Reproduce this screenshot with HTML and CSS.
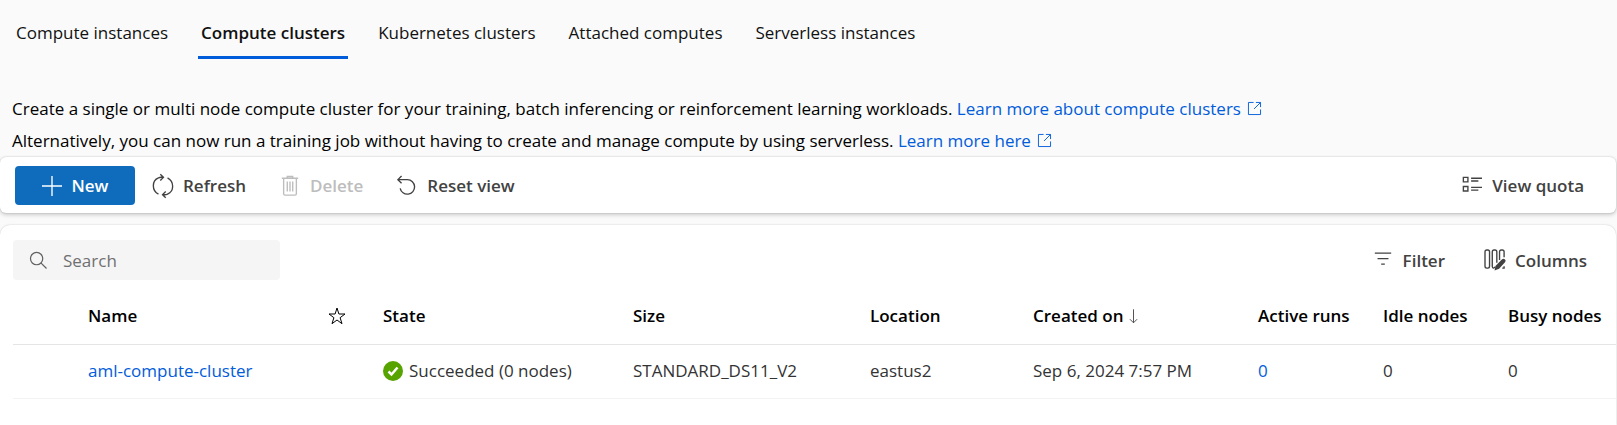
FILE: index.html
```html
<!DOCTYPE html>
<html lang="en">

<head>
    <meta charset="UTF-8">
    <meta name="viewport" content="width=device-width, initial-scale=1.0">
    <title>Compute</title>
    <link rel="stylesheet" href="styles.css">
</head>

<body>
    <nav class="tabs">
        <a class="tab" href="#instances">Compute instances</a>
        <a class="tab active" href="#clusters" aria-current="page">Compute clusters</a>
        <a class="tab" href="#kubernetes">Kubernetes clusters</a>
        <a class="tab" href="#attached">Attached computes</a>
        <a class="tab" href="#serverless">Serverless instances</a>
    </nav>

    <div class="intro">
        <p>Create a single or multi node compute cluster for your training, batch inferencing or reinforcement learning workloads.
            <a href="#learn-clusters">Learn more about compute clusters
                <svg class="external" viewBox="0 0 14 14"><path d="M6 .5H.5v13h13V8M8.5 .5h5v5M13.5 .5l-7 7" /></svg></a></p>
        <p>Alternatively, you can now run a training job without having to create and manage compute by using serverless.
            <a href="#learn-serverless">Learn more here
                <svg class="external" viewBox="0 0 14 14"><path d="M6 .5H.5v13h13V8M8.5 .5h5v5M13.5 .5l-7 7" /></svg></a></p>
    </div>

    <div class="toolbar">
        <button class="btn primary" type="button">
            <svg class="icon" viewBox="0 0 22 22"><path d="M11 0v22M0 11h22" /></svg>
            New
        </button>
        <button class="btn" type="button">
            <svg class="icon" viewBox="0 0 22 22"><path d="M6 20C-1.500 16-1.500 5 6 2q2-1 5-.5M8-2l3.500 3.500L8 5M16 2c7.500 4 7.500 15 0 18q-2 1-5 .5M14 24l-3.500-3.500L14 17" /></svg>
            Refresh
        </button>
        <button class="btn" type="button" disabled>
            <svg class="icon" viewBox="0 0 22 22"><path d="M2 2.500h18M8 2.500v-2h6v2M4 2.500V19.500q0 1.500 1.500 1.500h11q1.500 0 1.500-1.500V2.500M8 6v11M11 6v11M14 6v11" /></svg>
            Delete
        </button>
        <button class="btn" type="button">
            <svg class="icon" viewBox="0 0 22 22"><path d="M5 0 1 4l4 4M1 4h10.500a8 8 0 1 1-8 9.500" /></svg>
            Reset view
        </button>
        <button class="btn right" type="button">
            <svg class="icon" viewBox="0 0 22 22"><path d="M1.500 1.500h5v5h-5zM1.500 11.500h5v5h-5zM10 2.500h12M10 5.500h8M10 12.500h12M10 15.500h8" /></svg>
            View quota
        </button>
    </div>

    <div class="card">
        <div class="card-bar">
            <label class="search">
                <svg class="icon-search" viewBox="0 0 18 18"><circle cx="7" cy="7" r="6.500" /><path d="m11.500 11.500 6 6" /></svg>
                <input type="search" placeholder="Search" aria-label="Search">
            </label>
            <button class="btn right" type="button">
                <svg class="icon" viewBox="0 0 22 22"><path d="M2 3.500h18M5 9.500h12M9 15.500h4" /></svg>
                Filter
            </button>
            <button class="btn" type="button">
                <svg class="icon" viewBox="0 0 22 22">
                    <rect x="0" y="0" width="5" height="20" rx="2" />
                    <path d="M11 18.500q-2.500 3-3-.5V2q0-2 2-2h1q2 0 2 2v12M16 11V2q0-2 2-2h1q2 0 2 2v6M21 18v2h-2" />
                    <path class="solid" d="m10.500 22.500 1-5 7-7q2-1.500 3.500 0t0 3L15.500 20.500z" />
                </svg>
                Columns
            </button>
        </div>

        <table class="grid">
            <colgroup>
                <col class="col-select">
                <col class="col-name">
                <col class="col-star">
                <col class="col-state">
                <col class="col-size">
                <col class="col-location">
                <col class="col-created">
                <col class="col-count">
                <col class="col-count">
                <col>
            </colgroup>
            <thead>
                <tr>
                    <th></th>
                    <th>Name</th>
                    <th><svg class="star" viewBox="0 0 18 18" role="img" aria-label="Favorite"><path d="M9 1l1.900 6h6.100l-4.900 3.700 1.900 6L9 13l-5 3.700 1.900-6L1 7h6.100z" /></svg></th>
                    <th>State</th>
                    <th>Size</th>
                    <th>Location</th>
                    <th>Created on <svg class="sort" viewBox="0 0 10 16"><path d="M5 0v15M1 11l4 4 4-4" /></svg></th>
                    <th>Active runs</th>
                    <th>Idle nodes</th>
                    <th>Busy nodes</th>
                </tr>
            </thead>
            <tbody>
                <tr>
                    <td></td>
                    <td><a href="#aml-compute-cluster">aml-compute-cluster</a></td>
                    <td></td>
                    <td>
                        <span class="state">
                            <svg class="ok" viewBox="0 0 20 20"><circle cx="10" cy="10" r="10" /><path d="m5.500 10.500 3 3 6-7" /></svg>
                            Succeeded (0 nodes)
                        </span>
                    </td>
                    <td>STANDARD_DS11_V2</td>
                    <td>eastus2</td>
                    <td>Sep 6, 2024 7:57 PM</td>
                    <td><a href="#runs">0</a></td>
                    <td>0</td>
                    <td>0</td>
                </tr>
            </tbody>
        </table>
    </div>
</body>

</html>
```
FILE: styles.css
```css
* {
    box-sizing: border-box;
}

body {
    margin: 0;
    min-height: 100vh;
    display: flex;
    flex-direction: column;
    background-color: #fafafa;
    color: #000;
    font-family: "Open Sans", sans-serif;
    font-size: 17px;
    line-height: 24px;
}

a {
    color: #015cda;
    text-decoration: none;
}

svg {
    fill: none;
    stroke: currentColor;
    overflow: visible;
    flex-shrink: 0;
}

/* Tabs */
.tabs {
    display: flex;
    gap: 27px;
    padding: 21px 13px 0;
}

.tab {
    padding: 0 3px 11px;
    color: #111;
    border-bottom: 3px solid transparent;
}

.tab.active {
    font-weight: 600;
    border-bottom-color: #015cda;
}

/* Description */
.intro {
    padding: 34px 12px 0;
}

.intro p {
    margin: 0;
    line-height: 32px;
}

.external {
    width: 13px;
    height: 13px;
    margin-left: 3px;
}

/* Command bar */
.toolbar {
    display: flex;
    align-items: center;
    gap: 2px;
    margin: 0 1px 12px 0;
    padding: 9px 16px 8px 15px;
    background-color: #fff;
    border-radius: 6px;
    box-shadow: 0 0 2px rgba(0, 0, 0, 0.2), 0 2px 4px rgba(0, 0, 0, 0.18);
}

.btn {
    display: flex;
    align-items: center;
    gap: 10px;
    height: 39px;
    padding: 0 16px;
    border: none;
    background: none;
    color: #424242;
    font-family: inherit;
    font-size: 17px;
    font-weight: 600;
    cursor: pointer;
}

.btn:disabled {
    color: #bdbdbd;
    cursor: default;
}

.btn.primary {
    justify-content: center;
    width: 120px;
    background-color: #0f6cbd;
    border-radius: 4px;
    color: #fff;
}

.icon {
    width: 20px;
    height: 20px;
    stroke-width: 1.5;
}

.right {
    margin-left: auto;
}

/* Cluster list */
.card {
    flex: 1;
    margin-right: 1px;
    padding: 15px 0 0 13px;
    background-color: #fff;
    border-radius: 10px 10px 0 0;
    box-shadow: 0 0 2px rgba(0, 0, 0, 0.2);
}

.card-bar {
    display: flex;
    align-items: center;
    gap: 8px;
    padding-right: 13px;
}

.search {
    display: flex;
    align-items: center;
    gap: 16px;
    width: 267px;
    height: 40px;
    padding: 0 17px;
    background-color: #f5f5f5;
    border-radius: 4px;
    color: #616161;
}

.icon-search {
    width: 17px;
    height: 17px;
    stroke-width: 1.3;
}

.search input {
    width: 100%;
    padding: 0;
    border: none;
    outline: none;
    background: none;
    font-family: inherit;
    font-size: 17px;
}

.search input::placeholder {
    color: #707070;
}

.grid {
    width: 100%;
    table-layout: fixed;
    border-collapse: collapse;
}

.grid th,
.grid td {
    padding: 0;
    text-align: left;
    white-space: nowrap;
}

.grid th {
    height: 64px;
    padding-top: 9px;
    border-bottom: 1px solid #e5e5e5;
    font-weight: 600;
}

.grid td {
    height: 54px;
    border-bottom: 1px solid #f3f3f3;
    color: #333;
}

.col-select {
    width: 75px;
}

.col-name {
    width: 240px;
}

.col-star {
    width: 55px;
}

.col-state {
    width: 250px;
}

.col-size {
    width: 237px;
}

.col-location {
    width: 163px;
}

.col-created {
    width: 225px;
}

.col-count {
    width: 125px;
}

.star {
    display: block;
    width: 18px;
    height: 18px;
}

.sort {
    width: 9px;
    height: 15px;
    margin-left: 1px;
    color: #424242;
    vertical-align: -2px;
}

.state {
    display: flex;
    align-items: center;
    gap: 6px;
}

.ok {
    width: 20px;
    height: 20px;
}

.ok circle {
    fill: #57a300;
    stroke: none;
}

.ok path {
    stroke: #fff;
    stroke-width: 2.5;
}

.solid {
    fill: currentColor;
    stroke: none;
}
```
